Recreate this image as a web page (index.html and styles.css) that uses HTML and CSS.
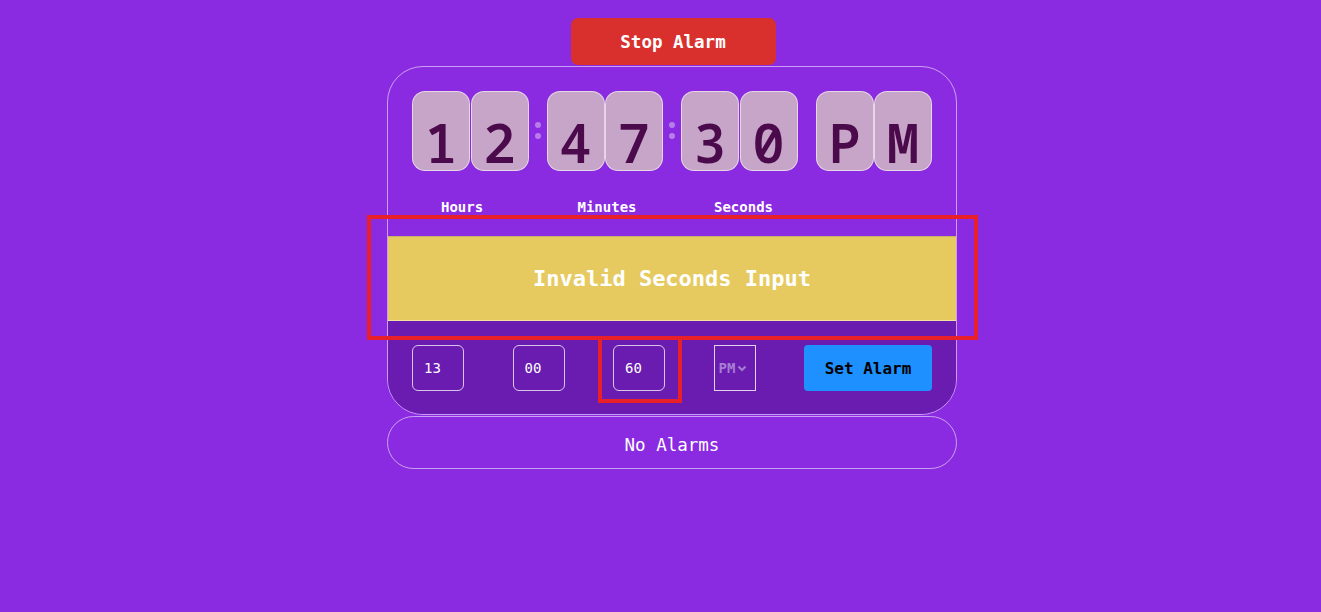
FILE: index.html
```html
<!DOCTYPE html>
<html>
<head>
<meta charset="utf-8">
<link rel="stylesheet" href="styles.css">
</head>
<body>
<div class="page">
  <button class="stop-btn">Stop Alarm</button>
  <div class="card">
    <div class="clock">
      <div class="group"><div class="digit">1</div><div class="digit">2</div></div>
      <div class="colon"><span></span><span></span></div>
      <div class="group"><div class="digit">4</div><div class="digit">7</div></div>
      <div class="colon"><span></span><span></span></div>
      <div class="group"><div class="digit">3</div><div class="digit">0</div></div>
      <div class="spacer"></div>
      <div class="group"><div class="digit">P</div><div class="digit">M</div></div>
    </div>
    <div class="labels">
      <span class="label">Hours</span>
      <span class="label">Minutes</span>
      <span class="label">Seconds</span>
    </div>
    <div class="alert">Invalid Seconds Input</div>
    <div class="controls">
      <div class="field">13</div>
      <div class="field">00</div>
      <div class="field">60</div>
      <div class="select">PM<svg width="10" height="8" viewBox="0 0 10 8"><path d="M1.5 2.5 L5 6 L8.5 2.5" fill="none" stroke="#a67fd4" stroke-width="2"/></svg></div>
      <button class="set-btn">Set Alarm</button>
    </div>
  </div>
  <div class="alarms">No Alarms</div>
</div>
<div class="mark mark-alert"></div>
<div class="mark mark-seconds"></div>
</body>
</html>
```
FILE: styles.css
```css
* { box-sizing: border-box; }
html, body { margin: 0; padding: 0; }
body {
  background: #8a2be2;
  font-family: "DejaVu Sans Mono", monospace;
  color: #fff;
  height: 612px;
  overflow: hidden;
}
.page {
  display: flex;
  flex-direction: column;
  align-items: center;
  padding-top: 18px;
  padding-left: 23px;
}
.stop-btn {
  width: 205px;
  height: 47px;
  border: none;
  border-radius: 7px;
  background: #d9302e;
  color: #fff;
  font-family: inherit;
  font-weight: bold;
  font-size: 17.5px;
  margin-left: 2px;
}
.card {
  margin-top: 1px;
  width: 570px;
  border: 1px solid rgba(255,255,255,0.55);
  border-radius: 36px;
  overflow: hidden;
}
.clock {
  display: flex;
  align-items: flex-start;
  padding: 24px 0 0 24px;
}
.group { display: flex; gap: 0.5px; }
.digit {
  width: 58px;
  height: 80px;
  background: #c7a5c8;
  border: 1px solid rgba(255,255,255,0.55);
  border-radius: 13px;
  color: #4b0a4b;
  font-family: "Noto Sans Mono", "DejaVu Sans Mono", monospace;
  font-size: 54px;
  font-weight: 600;
  text-align: center;
  line-height: 1;
  padding-top: 23px;
}
.colon {
  width: 18px;
  height: 80px;
  display: flex;
  flex-direction: column;
  align-items: center;
  padding-top: 31px;
  gap: 5px;
}
.colon span {
  width: 6px;
  height: 6px;
  border-radius: 50%;
  background: #b67ee8;
}
.spacer { width: 18px; }
.labels {
  display: flex;
  padding: 28px 0 0 53px;
  height: 65px;
}
.label {
  width: 136.5px;
  font-size: 14px;
  font-weight: bold;
  line-height: 16px;
}
.alert {
  height: 85px;
  background: #e6ca5f;
  border-top: 1px solid #c9b06a;
  border-bottom: 1px solid #f0e2a0;
  display: flex;
  align-items: center;
  justify-content: center;
  font-size: 22px;
  font-weight: bold;
  color: #fff;
}
.controls {
  background: #6a1bb0;
  display: flex;
  align-items: center;
  gap: 48.5px;
  padding: 24px 0 23px 24px;
}
.field {
  width: 52px;
  height: 46px;
  border: 1px solid rgba(255,255,255,0.75);
  border-radius: 6px;
  font-size: 14px;
  line-height: 44px;
  padding-left: 11px;
}
.select {
  width: 42px;
  height: 46px;
  border: 1px solid rgba(255,255,255,0.8);
  color: #a67fd4;
  font-size: 14px;
  font-weight: bold;
  display: flex;
  align-items: center;
  padding-left: 4px;
  gap: 2px;
}
.set-btn {
  width: 128px;
  height: 46px;
  border: none;
  border-radius: 4px;
  background: #1e90ff;
  color: #000;
  font-family: inherit;
  font-weight: bold;
  font-size: 16px;
}
.alarms {
  width: 570px;
  height: 53px;
  margin-top: 1px;
  border: 1px solid rgba(255,255,255,0.55);
  border-radius: 27px;
  display: flex;
  align-items: center;
  justify-content: center;
  font-size: 17.5px;
  padding-top: 4px;
}
.mark {
  position: absolute;
  border: 4px solid #e8202a;
}
.mark-alert { left: 367px; top: 215px; width: 611px; height: 125px; }
.mark-seconds { left: 598px; top: 336px; width: 84px; height: 67px; }
```
